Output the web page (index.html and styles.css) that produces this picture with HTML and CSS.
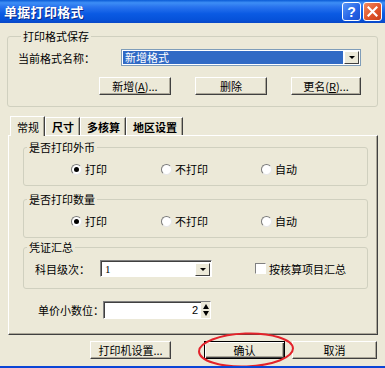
FILE: index.html
```html
<!DOCTYPE html>
<html lang="zh">
<head>
    <meta charset="utf-8">
    <title>单据打印格式</title>
    <link rel="stylesheet" href="styles.css">
</head>
<body>
<div class="window">
    <div class="titlebar">
        <span class="title">单据打印格式</span>
        <div class="caption">
            <span class="cap-btn help">?</span>
            <span class="cap-btn close">
                <svg width="11" height="11" viewBox="0 0 11 11"><path d="M1.5 1.5 L9.5 9.5 M9.5 1.5 L1.5 9.5" stroke="#fff" stroke-width="2.2" stroke-linecap="square"/></svg>
            </span>
        </div>
    </div>

    <fieldset class="group save-group">
        <legend>打印格式保存</legend>
        <div class="name-row">
            <span class="name-label">当前格式名称：</span>
            <div class="combo wide">
                <span class="combo-text selected">新增格式</span>
                <span class="drop"></span>
            </div>
        </div>
        <div class="btn-row">
            <button class="btn">新增(<u>A</u>)...</button>
            <button class="btn">删除</button>
            <button class="btn narrow">更名(<u>R</u>)...</button>
        </div>
    </fieldset>

    <div class="tabs">
        <span class="tab active">常规</span>
        <span class="tab">尺寸</span>
        <span class="tab">多核算</span>
        <span class="tab">地区设置</span>
    </div>
    <div class="panel">
        <fieldset class="group opt-group">
            <legend>是否打印外币</legend>
            <div class="radios">
                <label class="radio checked"><span class="dot"></span>打印</label>
                <label class="radio"><span class="dot"></span>不打印</label>
                <label class="radio"><span class="dot"></span>自动</label>
            </div>
        </fieldset>
        <fieldset class="group opt-group second">
            <legend>是否打印数量</legend>
            <div class="radios">
                <label class="radio checked"><span class="dot"></span>打印</label>
                <label class="radio"><span class="dot"></span>不打印</label>
                <label class="radio"><span class="dot"></span>自动</label>
            </div>
        </fieldset>
        <fieldset class="group sum-group">
            <legend>凭证汇总</legend>
            <div class="sum-row">
                <span class="level-label">科目级次：</span>
                <div class="combo small">
                    <span class="combo-text">1</span>
                    <span class="drop"></span>
                </div>
                <label class="check"><span class="box"></span>按核算项目汇总</label>
            </div>
        </fieldset>
        <div class="spin-row">
            <span class="spin-label">单价小数位：</span>
            <div class="spin">
                <span class="spin-value">2</span>
                <span class="arrows"><span class="up"></span><span class="down"></span></span>
            </div>
        </div>
    </div>

    <div class="footer">
        <button class="btn printer">打印机设置...</button>
        <button class="btn ok">确认</button>
        <button class="btn cancel">取消</button>
    </div>

    <svg class="circle" width="100" height="40" viewBox="0 0 100 40">
        <ellipse cx="50" cy="20" rx="47" ry="16.5" fill="none" stroke="#e3232b" stroke-width="2" transform="rotate(-2 50 20)"/>
    </svg>
</div>
</body>
</html>
```

FILE: styles.css
```css
* {
    box-sizing: border-box;
}

body {
    margin: 0;
    font: 11px/14px "Noto Sans CJK SC", "Liberation Sans", sans-serif;
    color: #000;
    background: #ece9d8;
}

.window {
    position: relative;
    width: 385px;
    height: 368px;
    background: #ece9d8;
    border-bottom: 2px solid #0b45d6;
    overflow: hidden;
}

.titlebar {
    height: 23px;
    display: flex;
    align-items: center;
    justify-content: space-between;
    padding: 0 3px 0 4px;
    background: linear-gradient(to bottom, #0a5bd6 0%, #3d8ef5 12%, #2a74ee 30%, #0a5ae3 60%, #0652da 85%, #0a48c6 100%);
}

.title {
    color: #fff;
    font-weight: bold;
    font-size: 13px;
    letter-spacing: 0.3px;
    text-shadow: 1px 1px #0b2a8a;
}

.caption {
    display: flex;
    gap: 2px;
}

.cap-btn {
    width: 19px;
    height: 19px;
    border: 1px solid #fff;
    border-radius: 3px;
    display: flex;
    align-items: center;
    justify-content: center;
    color: #fff;
    font: bold 14px/1 "Liberation Sans", sans-serif;
}

.help {
    background: linear-gradient(to bottom right, #5a97f7, #2563e6 60%, #1a4fd0);
}

.close {
    background: linear-gradient(to bottom right, #f08b63, #e1552a 55%, #c8401a);
}

/* group boxes */
.group {
    margin: 0;
    padding: 0;
    min-width: 0;
    border: 1px solid #d0d0bf;
    border-radius: 3px;
}

.group legend {
    padding: 0 2px;
    margin-left: 3px;
    line-height: 14px;
}

.save-group {
    margin: 6px 7px 0 7px;
    padding: 6px 16px 11px 10px;
}

.name-row {
    display: flex;
    align-items: center;
    height: 17px;
}

.name-label {
    width: 103px;
}

.combo {
    height: 17px;
    display: flex;
    align-items: center;
    background: #fff;
    border: 1px solid #7f9db9;
    padding: 1px;
}

.combo.wide {
    flex: 1;
}

.combo-text {
    flex: 1;
    height: 13px;
    line-height: 13px;
    padding-left: 2px;
}

.combo-text.selected {
    background: #316ac5;
    color: #fff;
}

.drop {
    width: 15px;
    height: 13px;
    margin-left: 1px;
    background: #ece9d8;
    border: 1px solid;
    border-color: #fff #404040 #404040 #fff;
    display: flex;
    align-items: center;
    justify-content: center;
}

.drop::after {
    content: "";
    border-left: 3px solid transparent;
    border-right: 3px solid transparent;
    border-top: 3px solid #000;
}

.btn-row {
    display: flex;
    justify-content: flex-end;
    gap: 24px;
    margin-top: 11px;
}

.btn {
    width: 72px;
    height: 18px;
    padding: 0;
    font: 11px/14px "Noto Sans CJK SC", "Liberation Sans", sans-serif;
    color: #000;
    background: #ece9d8;
    border: 1px solid;
    border-color: #fff #404040 #404040 #fff;
    box-shadow: inset -1px -1px #aca899;
}

.btn u {
    text-decoration: underline;
}

.btn.narrow {
    width: 70px;
}

/* tabs */
.tabs {
    display: flex;
    align-items: flex-end;
    height: 20px;
    margin-top: 8px;
    padding-left: 10px;
}

.tab {
    height: 18px;
    padding: 2px 5px 0 6px;
    border-top: 1px solid #fff;
    border-left: 1px solid #fff;
    border-right: 1px solid #404040;
    box-shadow: inset -1px 0 #aca899;
    font-weight: 600;
}

.tab.active {
    height: 20px;
    padding-top: 3px;
    font-weight: normal;
    position: relative;
    top: 1px;
    background: #ece9d8;
}

.panel {
    height: 200px;
    margin-left: 8px;
    width: 370px;
    border-top: 1px solid #fff;
    border-left: 1px solid #fff;
    border-right: 1px solid #404040;
    border-bottom: 1px solid #404040;
    box-shadow: inset -1px -1px #aca899;
    padding: 4px 9px 0 14px;
}

.opt-group {
    padding: 8px 0 9px 0;
}

.opt-group.second {
    margin-top: 6px;
}

.radios {
    display: grid;
    grid-template-columns: 90px 100px auto;
    height: 14px;
    padding-left: 47px;
}

.radio,
.check {
    display: flex;
    align-items: center;
    gap: 3px;
}

.dot {
    width: 11px;
    height: 11px;
    border-radius: 50%;
    background: #fff;
    border: 1px solid #7a7a7a;
    border-bottom-color: #e6e6e6;
    border-right-color: #e6e6e6;
    display: flex;
    align-items: center;
    justify-content: center;
}

.radio.checked .dot::after {
    content: "";
    width: 5px;
    height: 5px;
    border-radius: 50%;
    background: #000;
}

.sum-group {
    margin-top: 2px;
    padding: 6px 0 11px 0;
}

.sum-row {
    display: flex;
    align-items: center;
    height: 17px;
    padding-left: 11px;
}

.level-label {
    width: 65px;
}

.combo.small {
    width: 112px;
    border-color: #808080 #fff #fff #808080;
    box-shadow: inset 1px 1px #404040;
    padding: 2px 1px 1px 2px;
}

.combo.small .combo-text {
    font-family: "Liberation Serif", serif;
}

.check {
    margin-left: 43px;
    gap: 3px;
}

.box {
    width: 11px;
    height: 11px;
    background: #fff;
    border: 1px solid;
    border-color: #808080 #fff #fff #808080;
}

.spin-row {
    display: flex;
    align-items: center;
    height: 18px;
    margin-top: 12px;
    padding-left: 15px;
}

.spin-label {
    width: 65px;
    white-space: nowrap;
}

.spin {
    width: 108px;
    height: 18px;
    display: flex;
    align-items: center;
    background: #fff;
    border: 1px solid;
    border-color: #808080 #fff #fff #808080;
    box-shadow: inset 1px 1px #404040;
}

.spin-value {
    flex: 1;
    text-align: right;
    padding-right: 3px;
    font-family: "Liberation Sans", sans-serif;
    font-size: 11px;
}

.arrows {
    width: 9px;
    height: 16px;
    background: #ece9d8;
    display: flex;
    flex-direction: column;
    align-items: center;
    justify-content: center;
    gap: 2px;
}

.arrows .up {
    border-left: 3px solid transparent;
    border-right: 3px solid transparent;
    border-bottom: 5px solid #000;
}

.arrows .down {
    border-left: 3px solid transparent;
    border-right: 3px solid transparent;
    border-top: 5px solid #000;
}

.footer {
    display: flex;
    margin-top: 6px;
    padding-left: 90px;
}

.btn.printer,
.btn.ok {
    width: 81px;
}

.btn.ok {
    margin-left: 33px;
    border: 1px solid #000;
    box-shadow: inset 1px 1px #fff, inset -1px -1px #404040, inset -2px -2px #aca899;
}

.btn.cancel {
    width: 85px;
    margin-left: 7px;
}

.circle {
    position: absolute;
    left: 196px;
    top: 330px;
}
```
